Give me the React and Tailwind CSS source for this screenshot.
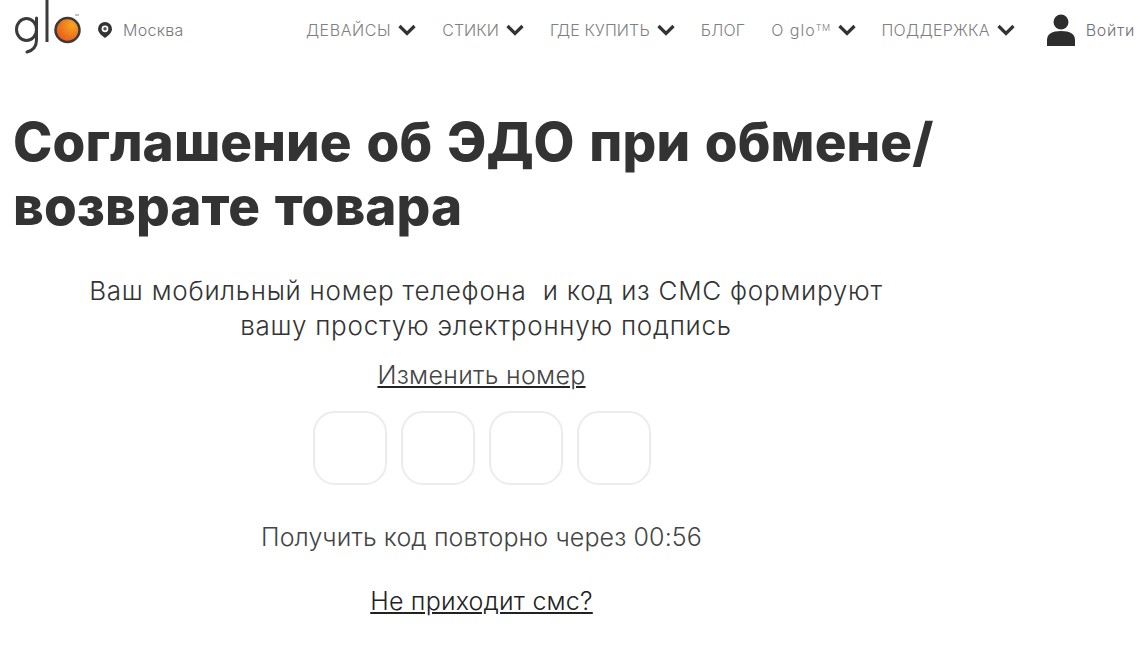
const navItems = [
    { label: 'ДЕВАЙСЫ', arrow: true, extra: 'tracking-[0.6px]' },
    { label: 'СТИКИ', arrow: true, extra: 'tracking-[0px]' },
    { label: 'ГДЕ КУПИТЬ', arrow: true, extra: 'tracking-[0.1px]' },
    { label: 'БЛОГ', arrow: false, extra: 'tracking-[0.2px]' },
    { label: 'O glo', mark: true, arrow: true, extra: 'tracking-[1px]' },
    { label: 'ПОДДЕРЖКА', arrow: true, extra: 'tracking-[0.2px]' },
];

const Logo = () => (
    <svg width="72" height="60" viewBox="11 0 72 60" className="shrink-0">
        <defs>
            <radialGradient id="gloBall" cx="0.7" cy="0.3" r="0.85">
                <stop offset="0" stopColor="#f9a51f" />
                <stop offset="1" stopColor="#e6501b" />
            </radialGradient>
        </defs>
        <ellipse cx="26.5" cy="29.5" rx="10" ry="11" fill="none" stroke="#3a3a3a" strokeWidth="3" />
        <path d="M36.5 18v22c0 7-4 10.500-9.500 12" fill="none" stroke="#3a3a3a" strokeWidth="3" strokeLinecap="round" />
        <path d="M47 0v42" fill="none" stroke="#3a3a3a" strokeWidth="3" />
        <circle cx="67.500" cy="30" r="12" fill="url(#gloBall)" stroke="#3a3a3a" strokeWidth="2.500" />
        <path d="M75 15h4" stroke="#888" strokeWidth="1" />
    </svg>
);

const Pin = () => (
    <svg width="14" height="16" viewBox="0 0 14 16" className="shrink-0">
        <path d="M7 0a7 7 0 0 1 7 7c0 3.500-3.500 6.500-7 9-3.500-2.500-7-5.500-7-9a7 7 0 0 1 7-7z" fill="#333" />
        <circle cx="7" cy="6.800" r="3.400" fill="#fff" />
        <circle cx="7" cy="6.800" r="1.700" fill="#555" />
    </svg>
);

const Chevron = () => (
    <svg width="18" height="12" viewBox="0 0 18 12" className="ml-[7px] shrink-0">
        <path d="M1.500 2l7.500 7.500 7.500-7.500" fill="none" stroke="#333" strokeWidth="3.200" />
    </svg>
);

const App = () => {
    return (
        <div className="w-[1145px] h-[663px] overflow-hidden bg-white font-['Inter','Liberation_Sans',sans-serif] text-[#3a3a3a]">
            <header className="flex items-center h-[60px] pl-[11px] pr-[10px]">
                <Logo />
                <div className="ml-[15px]">
                    <Pin />
                </div>
                <span className="ml-[11px] text-[16px] tracking-[0.3px] font-light text-[#77787c]">Москва</span>

                <nav className="flex items-center gap-[26px] ml-auto">
                    {navItems.map((item) => (
                        <div key={item.label} className={`flex items-center text-[#808080] text-[16px] font-light ${item.extra}`}>
                            {item.label}
                            {item.mark && <span className="text-[9px] leading-none tracking-[0.5px] mb-[6px]">TM</span>}
                            {item.arrow && <Chevron />}
                        </div>
                    ))}
                </nav>

                <svg width="28" height="32" viewBox="0 0 28 32" className="ml-[32px] mr-[11px] shrink-0" fill="#2d2d2d">
                    <circle cx="14" cy="8" r="7.500" />
                    <path d="M0 32v-6c0-6 5-9 14-9s14 3 14 9v6z" />
                </svg>
                <span className="text-[16px] font-light tracking-[0.7px] text-[#6f7074]">Войти</span>
            </header>

            <main className="w-[972px]">
                <h1 className="mt-[50px] ml-[13px] font-extrabold text-[53px] tracking-[0.1px] [word-spacing:3px] leading-[64px] text-[#333] whitespace-nowrap">
                    Соглашение об ЭДО при обмене/<br />возврате товара
                </h1>

                <p className="mt-[35px] text-center text-[26px] tracking-[0.75px] font-light leading-[35px] text-[#333]">
                    Ваш мобильный номер телефона&nbsp; и код из СМС формируют<br />вашу простую электронную подпись
                </p>

                <div className="w-[963px]">
                    <div className="mt-[16px] text-center text-[25px] tracking-[0.3px] font-light leading-[32px] text-[#444]">
                        <a className="underline decoration-[#222]">Изменить номер</a>
                    </div>

                    <div className="flex justify-center gap-[14px] mt-[20px]">
                        {[0, 1, 2, 3].map((i) => (
                            <div key={i} className="w-[74px] h-[74px] rounded-[22px] border-2 border-[#ececec]" />
                        ))}
                    </div>

                    <p className="mt-[36px] text-center text-[25px] tracking-[0.12px] font-light leading-[32px] text-[#444]">
                        Получить код повторно через 00:56
                    </p>

                    <div className="mt-[32px] text-center text-[25px] tracking-[0.2px] font-light leading-[32px] text-[#222]">
                        <a className="underline">Не приходит смс?</a>
                    </div>
                </div>
            </main>
        </div>
    );
};

export default App;
